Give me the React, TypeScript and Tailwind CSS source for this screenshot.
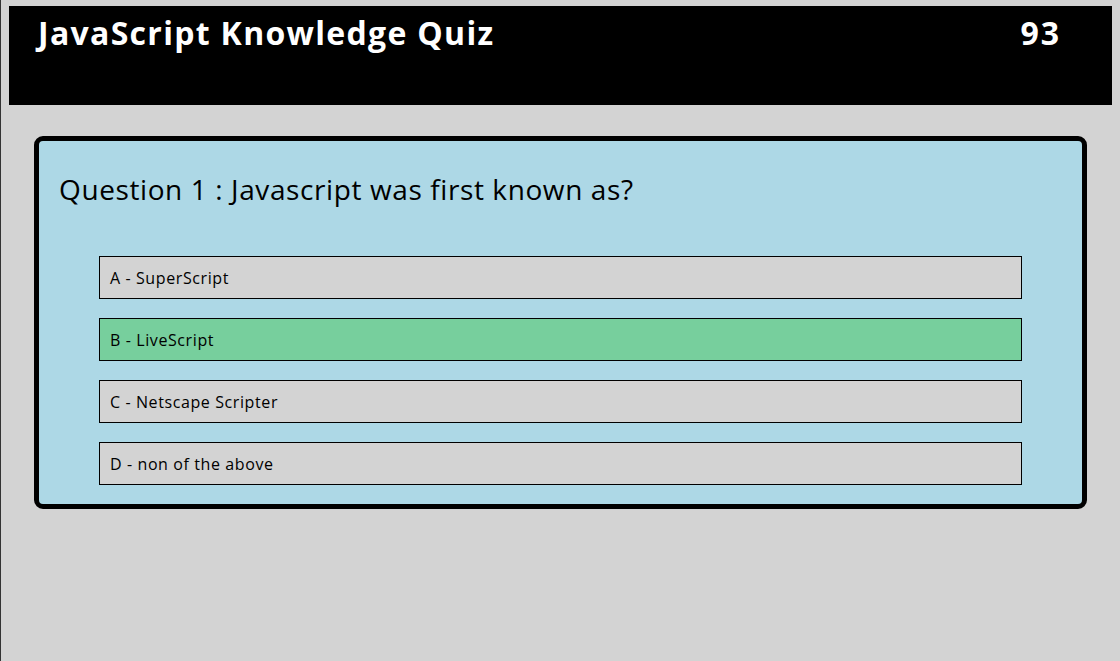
const options = [
    { id: 'A', label: 'SuperScript' },
    { id: 'B', label: 'LiveScript' },
    { id: 'C', label: 'Netscape Scripter' },
    { id: 'D', label: 'non of the above' },
];

export default function App() {
    const picked = 'B';

    return (
        <div className="min-h-screen bg-[#d3d3d3] border-l border-[#333333] px-[8px] pt-[6px] font-['Open_Sans',sans-serif] text-black">
            <header className="h-[99px] bg-black text-white flex justify-between items-start pl-[29px] pr-[51px]">
                <h1 className="text-[32px] font-bold leading-[54px] tracking-[1.3px]">JavaScript Knowledge Quiz</h1>
                <span className="text-[32px] font-bold leading-[54px] tracking-[2px]">93</span>
            </header>

            <main className="mt-[31px] mx-[25px] bg-[#add8e6] border-[5px] border-black rounded-[9px]">
                <h2 className="text-[28px] leading-[34px] tracking-[0.6px] pl-[20px] pt-[31px] pb-[50px]">
                    Question 1 : Javascript was first known as?
                </h2>
                <div className="flex flex-col gap-[19px] px-[60px] pb-[19px]">
                    {options.map((o) => (
                        <div
                            key={o.id}
                            className={
                                'h-[43px] border border-black flex items-center px-[10px] text-[16px] tracking-[0.6px] ' +
                                (o.id === picked ? 'bg-[#77cf9d]' : 'bg-[#d3d3d3]')
                            }
                        >
                            {o.id} - {o.label}
                        </div>
                    ))}
                </div>
            </main>
        </div>
    );
}
